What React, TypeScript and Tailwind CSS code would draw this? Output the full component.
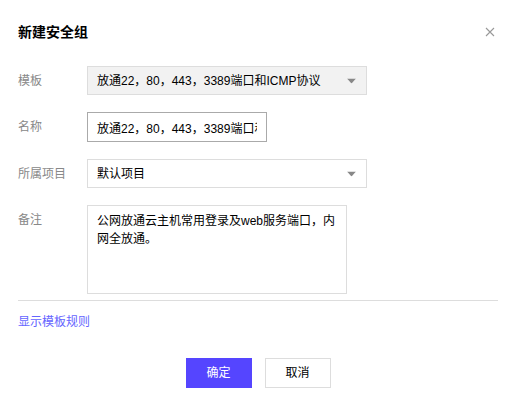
import React from "react";

const font = { fontFamily: '"Liberation Sans", "Noto Sans CJK SC", sans-serif' };

function Arrow() {
  return (
    <svg width="9" height="5" viewBox="0 0 9 5" className="absolute right-[10px] top-1/2 -translate-y-1/2">
      <path d="M0 0 H9 L4.5 5 Z" fill="#888" />
    </svg>
  );
}

function Row({ label, children, top = false }: { label: string; children: React.ReactNode; top?: boolean }) {
  return (
    <div className={`flex ${top ? "items-start" : "items-center"}`}>
      <div className={`w-[69px] shrink-0 text-[12px] text-[#888] ${top ? "pt-[6px]" : ""}`}>{label}</div>
      {children}
    </div>
  );
}

export default function App() {
  return (
    <div className="w-[518px] h-[406px] bg-white relative text-[#000]" style={font}>
      <div className="pl-[18px] pr-[20px] pt-[22px]">
        <div className="flex items-center justify-between h-[20px]">
          <div className="text-[14px] font-bold text-[#000]">新建安全组</div>
          <svg width="10" height="10" viewBox="0 0 10 10" className="mr-[3px]">
            <path d="M1 1 L9 9 M9 1 L1 9" stroke="#999" strokeWidth="1.1" />
          </svg>
        </div>
        <div className="mt-[24px] flex flex-col gap-[17px]">
          <Row label="模板">
            <div className="relative w-[280px] h-[29px] bg-[#f2f2f2] border border-[#ddd] flex items-center pl-[9px] text-[12px] text-[#000]">
              放通22，80，443，3389端口和ICMP协议
              <Arrow />
            </div>
          </Row>
          <Row label="名称">
            <input
              readOnly
              value="放通22，80，443，3389端口和ICMP协议"
              className="w-[180px] h-[30px] border border-[#aaa] pl-[9px] pr-[9px] text-[12px] text-[#000] outline-none bg-white"
              style={font}
            />
          </Row>
          <Row label="所属项目">
            <div className="relative w-[280px] h-[29px] bg-white border border-[#ddd] flex items-center pl-[9px] text-[12px] text-[#000]">
              默认项目
              <Arrow />
            </div>
          </Row>
          <Row label="备注" top>
            <div className="w-[260px] h-[89px] border border-[#ddd] pl-[9px] pr-[9px] pt-[6px] text-[12px] leading-[18px] text-[#000]">
              公网放通云主机常用登录及web服务端口，内网全放通。
            </div>
          </Row>
        </div>
        <div className="mt-[6px] h-px bg-[#ddd]" />
        <div className="mt-[13px] text-[12px] text-[#6565ff] leading-[16px]">显示模板规则</div>
        <div className="mt-[28px] flex justify-center gap-[13px]">
          <button className="w-[66px] h-[30px] bg-[#5545ff] text-white text-[12px]" style={font}>确定</button>
          <button className="w-[66px] h-[30px] bg-white border border-[#ddd] text-[#000] text-[12px]" style={font}>取消</button>
        </div>
      </div>
    </div>
  );
}
